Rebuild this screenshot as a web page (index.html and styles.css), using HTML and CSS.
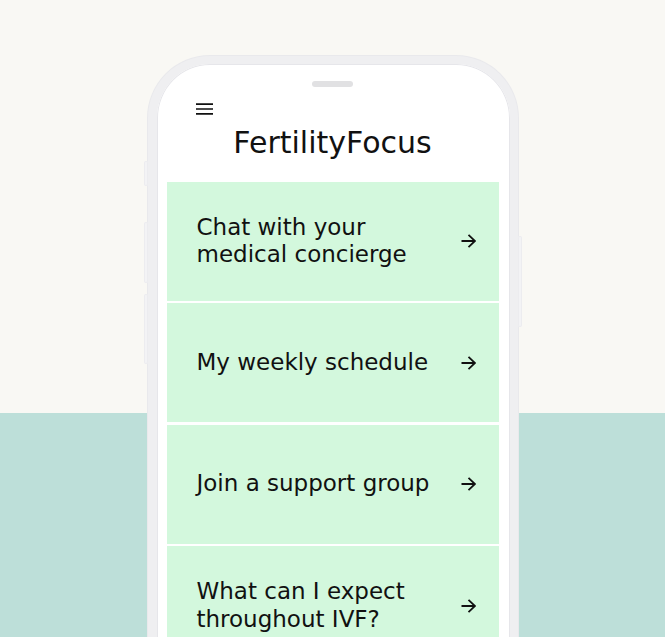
FILE: index.html
```html
<!DOCTYPE html>
<html lang="en">
<head>
<meta charset="utf-8">
<title>FertilityFocus</title>
<link rel="stylesheet" href="styles.css">
</head>
<body>
<div class="stage">
  <div class="phone">
    <span class="btn btn-l1"></span>
    <span class="btn btn-l2"></span>
    <span class="btn btn-l3"></span>
    <span class="btn btn-r1"></span>
    <div class="screen">
      <div class="pill"></div>
      <div class="menu">
        <svg width="17" height="12" viewBox="0 0 17 12" aria-hidden="true">
          <path d="M0 1.2H17M0 6H17M0 10.8H17" stroke="#111" stroke-width="1.7" fill="none"/>
        </svg>
      </div>
      <h1 class="title">FertilityFocus</h1>
      <div class="cards">
        <a class="card" href="#"><span class="label">Chat with your<br>medical concierge</span><svg class="arrow" width="15" height="14" viewBox="0 0 15 14"><path d="M0.5 7H14M7.5 0.8L14 7L7.5 13.2" stroke="#111" stroke-width="1.8" fill="none"/></svg></a>
        <a class="card" href="#"><span class="label">My weekly schedule</span><svg class="arrow" width="15" height="14" viewBox="0 0 15 14"><path d="M0.5 7H14M7.5 0.8L14 7L7.5 13.2" stroke="#111" stroke-width="1.8" fill="none"/></svg></a>
        <a class="card" href="#"><span class="label">Join a support group</span><svg class="arrow" width="15" height="14" viewBox="0 0 15 14"><path d="M0.5 7H14M7.5 0.8L14 7L7.5 13.2" stroke="#111" stroke-width="1.8" fill="none"/></svg></a>
        <a class="card" href="#"><span class="label">What can I expect<br>throughout IVF?</span><svg class="arrow" width="15" height="14" viewBox="0 0 15 14"><path d="M0.5 7H14M7.5 0.8L14 7L7.5 13.2" stroke="#111" stroke-width="1.8" fill="none"/></svg></a>
      </div>
    </div>
  </div>
</div>
</body>
</html>
```

FILE: styles.css
```css
html, body {
  margin: 0;
  padding: 0;
  height: 100%;
  overflow: hidden;
}
body {
  background: linear-gradient(to bottom, #f9f8f4 0, #f9f8f4 413px, #bddfd9 413px, #bddfd9 100%);
  font-family: "DejaVu Sans", "Liberation Sans", sans-serif;
  color: #111;
}
.stage {
  display: flex;
  justify-content: center;
  padding-top: 56px;
}
.phone {
  position: relative;
  width: 353px;
  height: 720px;
  border: 8px solid #efeff1;
  border-left-width: 9px;
  border-radius: 62px;
  background: #fff;
  box-shadow: 0 0 0 1px #e9e9ec, inset 0 0 0 1px #e6e6ea;
}
.btn {
  position: absolute;
  width: 4px;
  background: #f3f3f5;
  border-radius: 2px;
  box-shadow: inset 0 0 0 1px #ececef;
}
.btn-l1 { left: -13px; top: 97px; height: 25px; }
.btn-l2 { left: -13px; top: 158px; height: 61px; }
.btn-l3 { left: -13px; top: 230px; height: 70px; }
.btn-r1 { right: -12px; top: 172px; height: 91px; }
.screen {
  padding: 17px 11px 0 10px;
  border-radius: 54px;
}
.pill {
  width: 41px;
  height: 6px;
  margin: 0 auto;
  border-radius: 3px;
  background: #e1e1e3;
}
.menu {
  margin: 15.5px 0 0 29px;
  height: 12px;
  line-height: 0;
}
.title {
  margin: 10.5px 0 0;
  font-weight: normal;
  font-size: 30px;
  line-height: 36px;
  text-align: center;
  letter-spacing: 0;
}
.cards {
  margin-top: 20.5px;
  display: flex;
  flex-direction: column;
  gap: 2.6px;
}
.card {
  display: flex;
  align-items: center;
  justify-content: space-between;
  height: 119px;
  padding: 0 23px 0 30px;
  background: #d3f8dd;
  color: #111;
  text-decoration: none;
}
.label {
  font-size: 23px;
  line-height: 27.5px;
}
.arrow {
  flex: none;
}
```
